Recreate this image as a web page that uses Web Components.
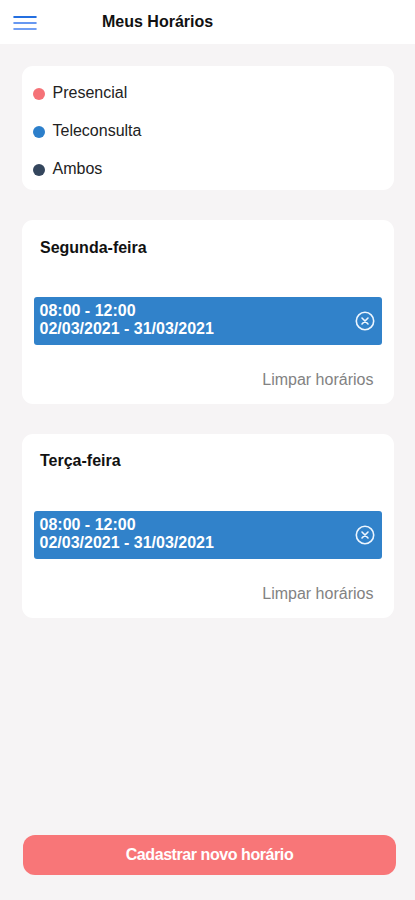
<!DOCTYPE html>
<html lang="pt-BR">
<head>
<meta charset="utf-8">
<title>Meus Horários</title>
<style>
body { margin: 0; background: #f6f4f5; color: #111; font: 16px/18px "Liberation Sans", Arial, sans-serif; }
</style>
</head>
<body>
<schedule-page>
  <app-header slot="header">Meus Horários</app-header>
  <card-box style="--pad: 18px 11px 12px 10.5px; --h: 124px">
    <legend-item style="--dot: #f57277">Presencial</legend-item>
    <legend-item style="--dot: #2c7fcb">Teleconsulta</legend-item>
    <legend-item style="--dot: #34465d">Ambos</legend-item>
  </card-box>
  <day-card day="Segunda-feira">
    <time-slot hours="08:00 - 12:00" dates="02/03/2021 - 31/03/2021"></time-slot>
  </day-card>
  <day-card day="Terça-feira" style="--title-top: 18px">
    <time-slot hours="08:00 - 12:00" dates="02/03/2021 - 31/03/2021"></time-slot>
  </day-card>
  <primary-button slot="footer">Cadastrar novo horário</primary-button>
</schedule-page>
<script>
const define = (name, html) => customElements.define(name, class extends HTMLElement {
  constructor() {
    super();
    this.attachShadow({ mode: 'open' }).innerHTML = html;
  }
  connectedCallback() {
    this.shadowRoot.querySelectorAll('[data-attr]').forEach(el => {
      el.textContent = this.getAttribute(el.dataset.attr);
    });
  }
});

define('app-header', `
<style>
  :host { display: flex; align-items: flex-start; height: 44px; box-sizing: border-box; padding: 12px 13px 0; background: #fff; }
  svg { width: 24px; height: 20px; margin-right: 65px; flex: none; }
  h1 { margin: 1px 0 0; font: bold 16px/18px "Liberation Sans", Arial, sans-serif; color: #111; }
</style>
<svg viewBox="0 0 24 20" fill="none" stroke-width="2" stroke-linecap="round">
  <path d="M1.2 5H22.8" stroke="#246fe0"/><path d="M1.2 11H22.8" stroke="#6798f1"/><path d="M1.2 17H22.8" stroke="#729ff3"/>
</svg>
<h1><slot></slot></h1>`);

define('card-box', `
<style>
  :host { display: flex; flex-direction: column; gap: 20px; box-sizing: border-box; height: var(--h); padding: var(--pad); background: #fff; border-radius: 11px; }
</style>
<slot></slot>`);

define('legend-item', `
<style>
  :host { display: flex; align-items: center; height: 18px; color: #222; }
  i { width: 12px; height: 12px; margin: 2px 8px 0 0; border-radius: 50%; background: var(--dot); }
</style>
<i></i><slot></slot>`);

define('day-card', `
<style>
  :host { display: flex; flex-direction: column; height: 184px; box-sizing: border-box; padding: 0 12px 0 11.5px; background: #fff; border-radius: 11px; }
  h2 { margin: 0; height: 76.6px; box-sizing: border-box; padding: var(--title-top, 19px) 6.5px 0; font: bold 16px/18px "Liberation Sans", Arial, sans-serif; color: #111; }
  button { align-self: flex-end; margin: 26px 8.6px 0 0; padding: 0; border: 0; background: none; font: 16px/18px "Liberation Sans", Arial, sans-serif; color: #828282; }
</style>
<h2 data-attr="day"></h2>
<slot></slot>
<button>Limpar horários</button>`);

define('time-slot', `
<style>
  :host { display: flex; justify-content: space-between; align-items: center; height: 48.4px; box-sizing: border-box; padding: 0 7px 0 6px; background: #3182ca; border-radius: 3px; color: #fff; font-weight: bold; }
  div { display: flex; flex-direction: column; margin-top: -2px; }
  svg { width: 20px; height: 20px; }
</style>
<div><span data-attr="hours"></span><span data-attr="dates"></span></div>
<svg viewBox="0 0 20 20" fill="none" stroke="#edf6ff" stroke-width="1.6" stroke-linecap="round">
  <circle cx="10" cy="10" r="8.7"/><path d="M7 7L13 13M13 7L7 13"/>
</svg>`);

define('primary-button', `
<style>
  :host { display: block; }
  button { display: block; width: 100%; height: 40px; padding: 0 0 1px; border: 0; border-radius: 12px; background: #f87678; color: #fff; font: bold 16px/18px "Liberation Sans", Arial, sans-serif; letter-spacing: -0.43px; }
</style>
<button><slot></slot></button>`);

define('schedule-page', `
<style>
  :host { display: flex; flex-direction: column; height: 900px; }
  main { flex: 1; display: flex; flex-direction: column; gap: 30px; padding: 22px 21px 0 22px; }
  footer { padding: 0 19px 25px 23px; }
</style>
<slot name="header"></slot>
<main><slot></slot></main>
<footer><slot name="footer"></slot></footer>`);
</script>
</body>
</html>
